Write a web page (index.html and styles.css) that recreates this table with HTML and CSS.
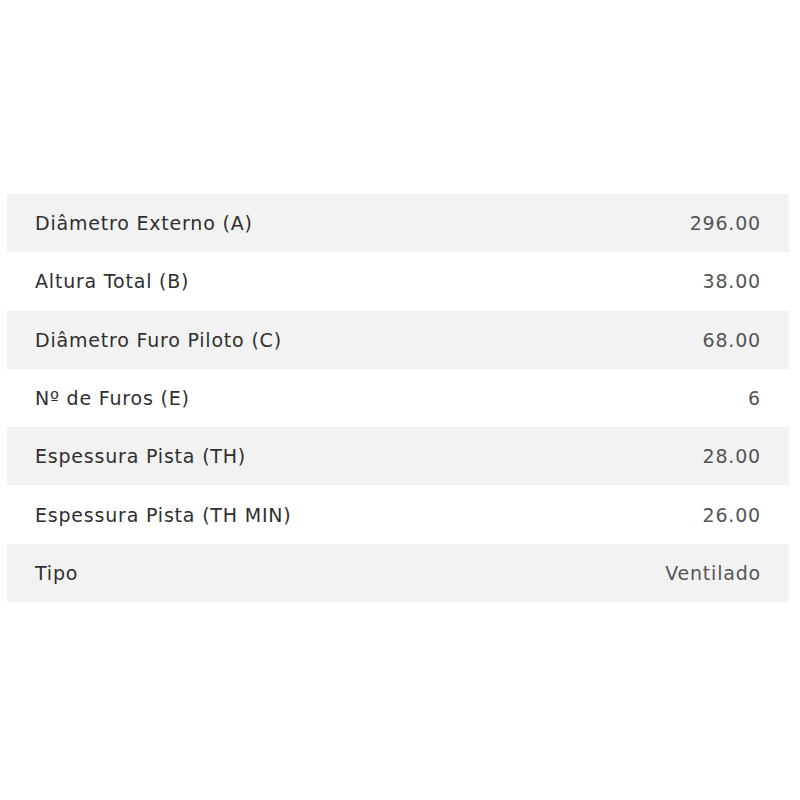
FILE: index.html
```html
<!DOCTYPE html>
<html lang="pt">
<head>
<meta charset="utf-8">
<link rel="stylesheet" href="styles.css">
</head>
<body>
<div class="page">
  <table class="specs">
    <tbody>
      <tr><td class="label">Diâmetro Externo (A)</td><td class="value">296.00</td></tr>
      <tr><td class="label">Altura Total (B)</td><td class="value">38.00</td></tr>
      <tr><td class="label">Diâmetro Furo Piloto (C)</td><td class="value">68.00</td></tr>
      <tr><td class="label">Nº de Furos (E)</td><td class="value">6</td></tr>
      <tr><td class="label">Espessura Pista (TH)</td><td class="value">28.00</td></tr>
      <tr><td class="label">Espessura Pista (TH MIN)</td><td class="value">26.00</td></tr>
      <tr><td class="label">Tipo</td><td class="value">Ventilado</td></tr>
    </tbody>
  </table>
</div>
</body>
</html>
```
FILE: styles.css
```css
html, body {
  margin: 0;
  background: #ffffff;
}
.page {
  padding: 194px 11px 0 7px;
}
.specs {
  width: 782px;
  border-collapse: collapse;
  font-family: "DejaVu Sans", "Liberation Sans", sans-serif;
  font-size: 19px;
  letter-spacing: 0.8px;
}
.specs tr {
  height: 58.3px;
}
.specs tr:nth-child(odd) {
  background: #f2f2f2;
}
.specs td {
  padding: 0 28px;
  vertical-align: middle;
}
.label {
  color: #2f2f2f;
  font-weight: 400;
  text-align: left;
}
.value {
  color: #555555;
  font-weight: 400;
  text-align: right;
  padding-right: 27px;
}
```
